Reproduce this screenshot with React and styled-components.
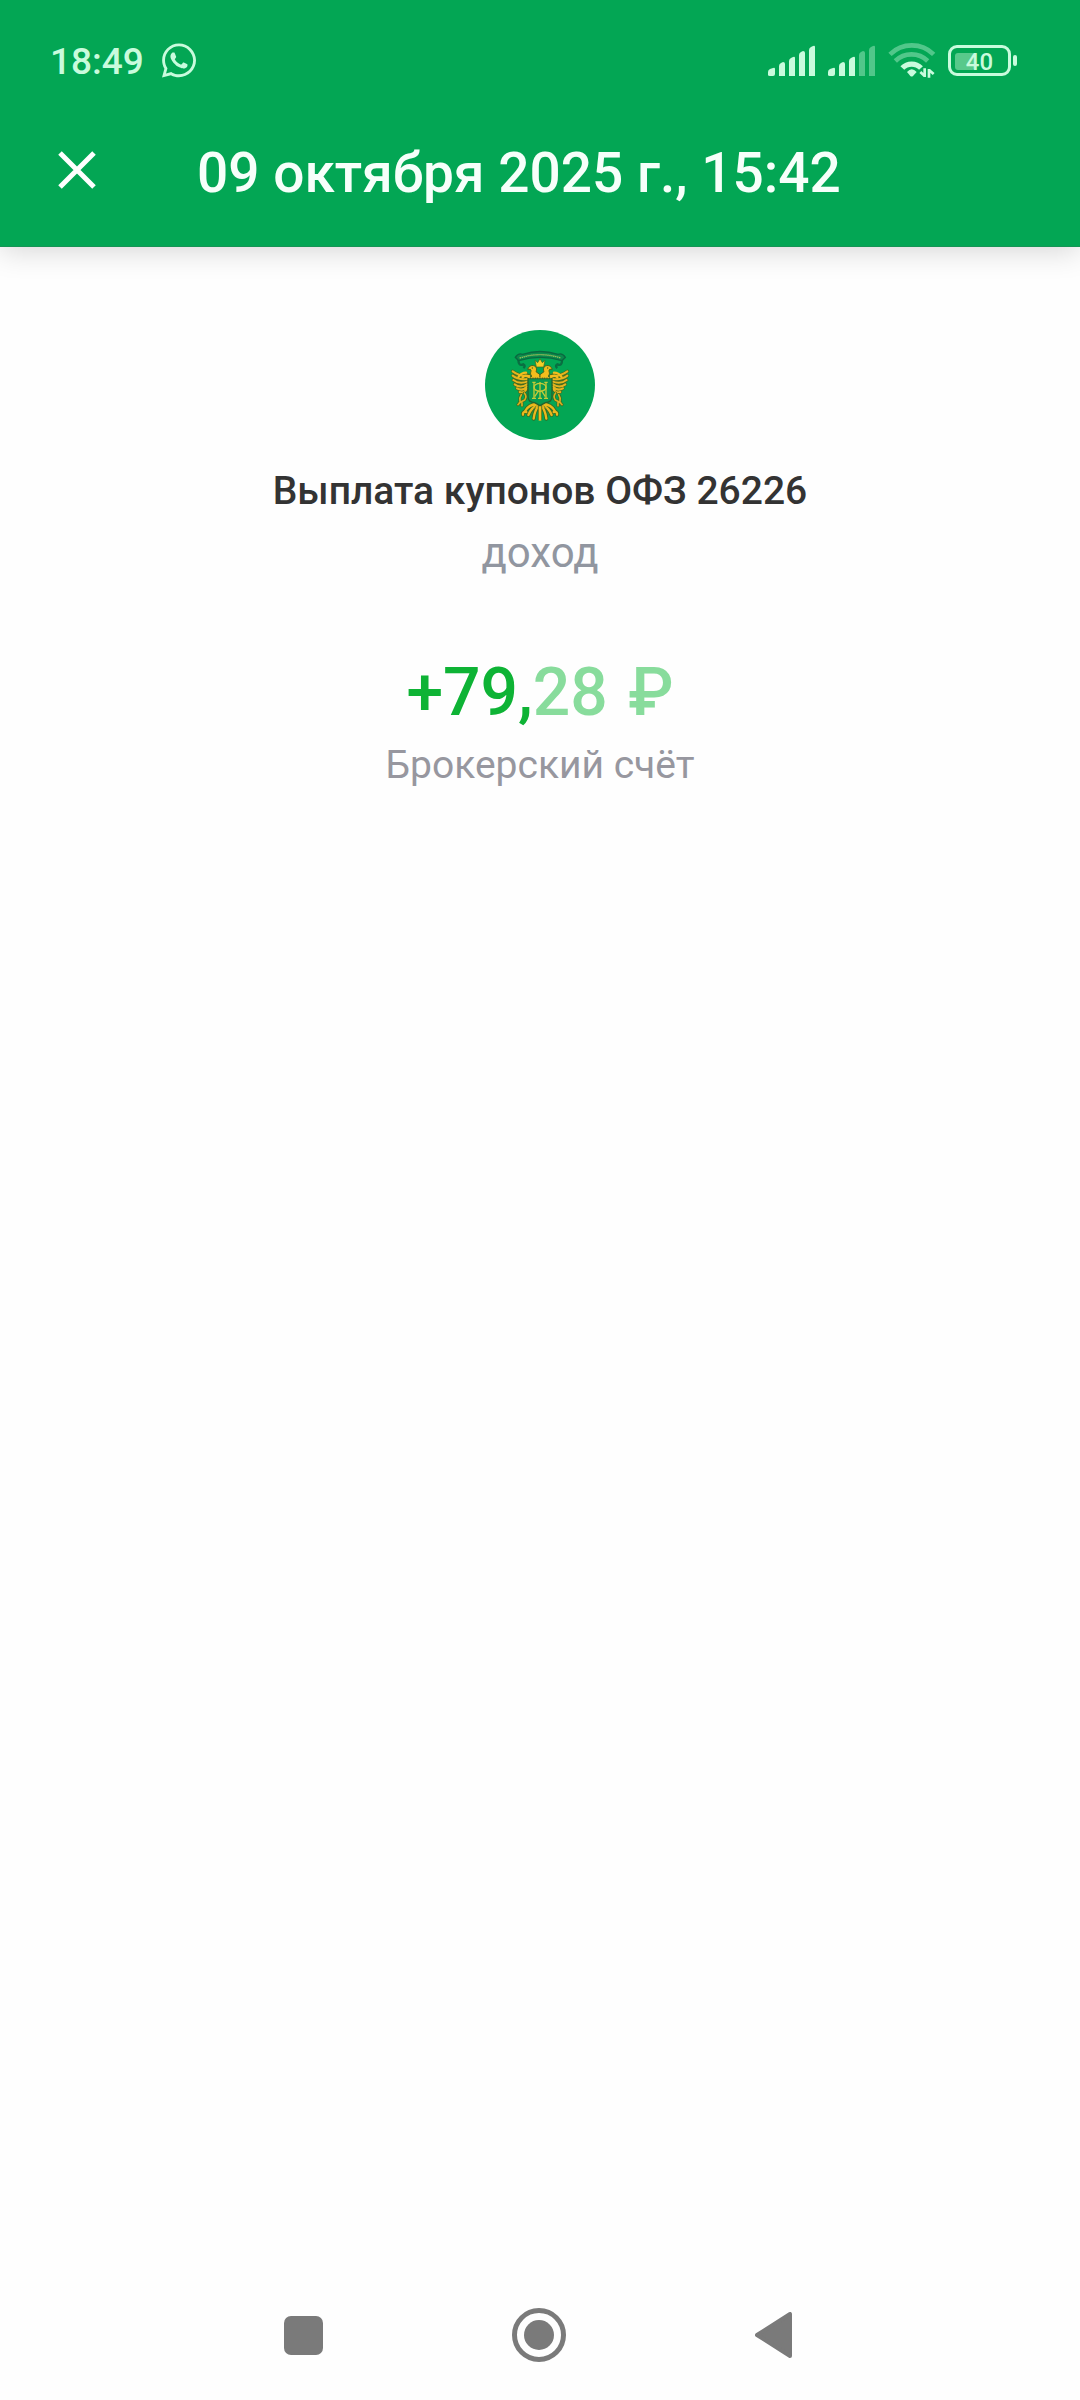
import React from "react";
import styled, { createGlobalStyle } from "styled-components";
import { FaWhatsapp } from "react-icons/fa6";

const GlobalStyle = createGlobalStyle`
  * { box-sizing: border-box; }
  body {
    margin: 0;
    background: #fefefe;
    font-family: Roboto, "Noto Sans", sans-serif;
  }
`;

const Screen = styled.div`
  display: flex;
  flex-direction: column;
  min-height: 100vh;
`;

const Header = styled.header`
  background: #03a654;
  box-shadow: 0 4px 28px rgba(0, 0, 0, 0.16);
  border-bottom: 1px solid #159455;
`;

const StatusBar = styled.div`
  display: flex;
  align-items: center;
  justify-content: space-between;
  height: 120px;
  padding: 0 63px 0 50px;
  color: #c9fbdd;
`;

const StatusGroup = styled.div`
  display: flex;
  align-items: center;
  gap: ${(p) => p.$gap}px;
`;

const Clock = styled.time`
  padding-top: 4px;
  font-size: 37px;
  font-weight: 500;
  line-height: 44px;
`;

const WhatsAppIcon = styled(FaWhatsapp)`
  width: 34px;
  height: 39px;
`;

const Battery = styled.div`
  display: flex;
  align-items: center;
  gap: 2px;
`;

const BatteryBody = styled.div`
  display: grid;
  align-items: center;
  width: 63px;
  height: 31px;
  padding: 4px;
  border: 3px solid currentColor;
  border-radius: 9px;
`;

const BatteryFill = styled.span`
  grid-area: 1 / 1;
  height: 17px;
  border-radius: 3px;
  background: #58c98b;
`;

const BatteryLabel = styled.span`
  grid-area: 1 / 1;
  padding-top: 2px;
  font-size: 24px;
  font-weight: 500;
  line-height: 17px;
  text-align: center;
`;

const BatteryTip = styled.span`
  width: 4px;
  height: 11px;
  border-radius: 2px;
  background: currentColor;
`;

const TitleBar = styled.div`
  display: flex;
  align-items: center;
  gap: 90px;
  height: 126px;
  padding: 0 47px 26px;
`;

const IconButton = styled.button`
  display: flex;
  align-items: center;
  justify-content: center;
  width: ${(p) => p.$size}px;
  height: ${(p) => p.$size}px;
  padding: 0;
  border: 0;
  background: none;
  color: inherit;
  cursor: pointer;
`;

const CloseButton = styled(IconButton)`
  color: #fff;
`;

const Title = styled.h1`
  margin: 0;
  padding-top: 6px;
  color: #f6fffa;
  font-size: 55px;
  font-weight: 500;
  line-height: 64px;
`;

const Details = styled.main`
  display: flex;
  flex: 1;
  flex-direction: column;
  align-items: center;
  padding: 83px 32px 0;
  text-align: center;
`;

const Operation = styled.h2`
  margin: 27px 0 0;
  color: #333;
  font-size: 39px;
  font-weight: 500;
  line-height: 48px;
`;

const Caption = styled.p`
  margin: ${(p) => p.$top}px 0 0;
  color: ${(p) => p.$color};
  font-size: ${(p) => p.$size}px;
  line-height: 48px;
`;

const Amount = styled.p`
  margin: 76px 0 0;
  color: #0eb335;
  font-size: 66px;
  font-weight: 500;
  line-height: 80px;
`;

const Cents = styled.span`
  color: #88dc9c;
`;

const Currency = styled.span`
  margin-left: 4px;
`;

const NavBar = styled.nav`
  display: flex;
  align-items: center;
  justify-content: center;
  gap: 115px;
  height: 130px;
  padding-right: 3px;
  color: #7a7a7a;
`;

function Signal({ level }) {
  const bars = [
    "M0 30 V27 Q0 25 2 24 L5 23 Q7 22 7 24 V29 Q7 31 5 31 H2 Q0 31 0 30Z",
    "M11 21 Q11 19 13 18 L15 17 Q17 17 17 19 V31 H11Z",
    "M21 16 Q21 14 23 13 L25 12 Q27 11 27 13 V31 H21Z",
    "M31 10 Q31 8 33 7 L35 6 Q37 6 37 8 V31 H31Z",
    "M41 5 Q41 3 43 2 L45 1 Q47 0 47 2 V31 H41Z",
  ];
  return (
    <svg width="48" height="31" viewBox="0 0 48 31" fill="currentColor" aria-hidden="true">
      {bars.map((d, i) => (
        <path key={i} d={d} opacity={i < level ? 1 : 0.4} />
      ))}
    </svg>
  );
}

function Wifi() {
  return (
    <svg width="48" height="36" viewBox="408 68 144 108" fill="none" stroke="currentColor" strokeWidth="14" aria-hidden="true">
      <path d="M414 105 A93 93 0 0 1 545 105" opacity=".4" />
      <path d="M430 125 A69 69 0 0 1 527 125" opacity=".4" />
      <path d="M451 146 A39 39 0 0 1 507 146" strokeWidth="16" />
      <path d="M465 158 Q479 142 494 158 L483 170 Q479 173 475 170Z" fill="currentColor" stroke="none" />
      <path d="M518 147 V173 M518 170 L505 158 M531 175 V149 M531 152 L545 164" strokeWidth="8" />
    </svg>
  );
}

const FEATHERS =
  "M178 182 Q150 184 128 168 M176 190 Q148 196 128 181 M174 198 Q148 208 130 194 M172 206 Q152 220 134 207 M171 213 Q158 229 141 219 M170 220 Q162 236 149 230";
const TAIL = "M204 266 Q176 266 165 288 M206 268 Q184 276 175 299 M207 270 Q194 284 191 310 M169 290 Q157 288 159 298";

function EmblemHalf() {
  return (
    <g strokeLinecap="round" strokeLinejoin="round" fill="none">
      <path d="M178 176 Q166 166 158 174 Q140 176 130 170 L132 205 L150 231 L174 226 L182 184Z" fill="#5d7a1c" />
      <path d={FEATHERS} stroke="#3f6a22" strokeWidth="10" />
      <path d={FEATHERS} stroke="#e6b41e" strokeWidth="6" />
      <path d="M168 172 Q154 172 146 184 M176 184 Q164 178 158 186" stroke="#f2bd1d" strokeWidth="7" />
      <path
        fill="#f2bd1d"
        stroke="#46641c"
        strokeWidth="3"
        d="M184 181 C177 172 187 168 181 162 L173 162 C176 153 184 149 191 151 C200 153 201 163 198 169 L210 178 V188 H184Z"
      />
      <circle cx="187" cy="158" r="2" fill="#46641c" />
      <path d="M163 233 Q172 243 164 254 M154 238 Q148 246 150 258 M164 254 L148 262 M152 260 L144 268 M156 262 L156 271" stroke="#356a22" strokeWidth="9" />
      <path d="M163 233 Q172 243 164 254 M154 238 Q148 246 150 258 M164 254 L148 262 M152 260 L144 268 M156 262 L156 271" stroke="#d9ae20" strokeWidth="5" />
      <path d={TAIL} stroke="#356a22" strokeWidth="12" />
      <path d={TAIL} stroke="#ecb81d" strokeWidth="7" />
      <path d="M198 272 Q186 284 183 300" stroke="#55711d" strokeWidth="2" />
    </g>
  );
}

function Emblem() {
  return (
    <svg width="110" height="110" viewBox="45 44 330 330" role="img" aria-label="ОФЗ">
      <circle cx="210" cy="209" r="165" fill="#03a654" />
      <path d="M145 132 Q145 154 160 147 Q168 151 160 158 M276 132 Q277 154 262 147 Q254 151 262 158" fill="none" stroke="#0a6e42" strokeWidth="7" />
      <path
        d="M136 126 Q145 112 158 117 Q210 100 264 117 Q277 112 286 126 L276 136 Q211 116 146 136Z"
        fill="#0b8a4c"
        stroke="#0a6840"
        strokeWidth="4"
      />
      <path d="M149 128 Q210 108 273 128" fill="none" stroke="#a6c25a" strokeWidth="4" strokeDasharray="4 2" />
      <EmblemHalf />
      <g transform="translate(420 0) scale(-1 1)">
        <EmblemHalf />
      </g>
      <path d="M195 135 L203 142 L210 130 L217 142 L225 135 L221 155 H199Z" fill="#f2cf28" stroke="#46641c" strokeWidth="2" />
      <path d="M210 268 V314" stroke="#356a22" strokeWidth="13" />
      <path d="M210 268 V316" stroke="#f2bd1d" strokeWidth="8" />
      <path d="M174 190 H246 V244 Q246 260 226 262 L210 271 L194 262 Q174 260 174 244Z" fill="#079a50" stroke="#24622e" strokeWidth="4" />
      <path d="M176 187 H244" stroke="#d7b326" strokeWidth="4" strokeDasharray="5 2" />
      <g stroke="#c3cb37" strokeWidth="4" fill="none">
        <path d="M187 201 H197 M192 201 V249 M186 249 H198 M223 201 H233 M228 201 V249 M222 249 H234" />
        <path d="M210 200 V249 M204 249 H216 M194 244 L206 226 M226 244 L214 226" />
        <ellipse cx="210" cy="216" rx="18" ry="12" />
      </g>
    </svg>
  );
}

export default function App() {
  return (
    <Screen>
      <GlobalStyle />
      <Header>
        <StatusBar>
          <StatusGroup $gap={18}>
            <Clock>18:49</Clock>
            <WhatsAppIcon aria-label="WhatsApp" />
          </StatusGroup>
          <StatusGroup $gap={12}>
            <Signal level={5} />
            <Signal level={3} />
            <Wifi />
            <Battery>
              <BatteryBody>
                <BatteryFill style={{ width: "40%" }} />
                <BatteryLabel>40</BatteryLabel>
              </BatteryBody>
              <BatteryTip />
            </Battery>
          </StatusGroup>
        </StatusBar>
        <TitleBar>
          <CloseButton $size={60} aria-label="Закрыть">
            <svg width="38" height="38" viewBox="0 0 38 38" stroke="currentColor" strokeWidth="5" aria-hidden="true">
              <path d="M2 2 L36 36 M36 2 L2 36" />
            </svg>
          </CloseButton>
          <Title>09 октября 2025 г., 15:42</Title>
        </TitleBar>
      </Header>
      <Details>
        <Emblem />
        <Operation>Выплата купонов ОФЗ 26226</Operation>
        <Caption $top={14} $size={42} $color="#9196a0">доход</Caption>
        <Amount>
          +79,
          <Cents>
            28 <Currency>₽</Currency>
          </Cents>
        </Amount>
        <Caption $top={8} $size={39} $color="#97979f">Брокерский счёт</Caption>
      </Details>
      <NavBar aria-label="Системная навигация">
        <IconButton $size={120} aria-label="Недавние приложения">
          <svg width="39" height="39" viewBox="0 0 39 39" fill="currentColor" aria-hidden="true">
            <rect width="39" height="39" rx="7" />
          </svg>
        </IconButton>
        <IconButton $size={120} aria-label="Домой">
          <svg width="54" height="54" viewBox="0 0 54 54" aria-hidden="true">
            <circle cx="27" cy="27" r="24.5" fill="none" stroke="currentColor" strokeWidth="5" />
            <circle cx="27" cy="27" r="15" fill="currentColor" />
          </svg>
        </IconButton>
        <IconButton $size={120} aria-label="Назад">
          <svg width="37" height="46" viewBox="0 0 37 46" fill="currentColor" stroke="currentColor" strokeWidth="4" strokeLinejoin="round" aria-hidden="true">
            <path d="M2 23 L35 2 V44Z" />
          </svg>
        </IconButton>
      </NavBar>
    </Screen>
  );
}
